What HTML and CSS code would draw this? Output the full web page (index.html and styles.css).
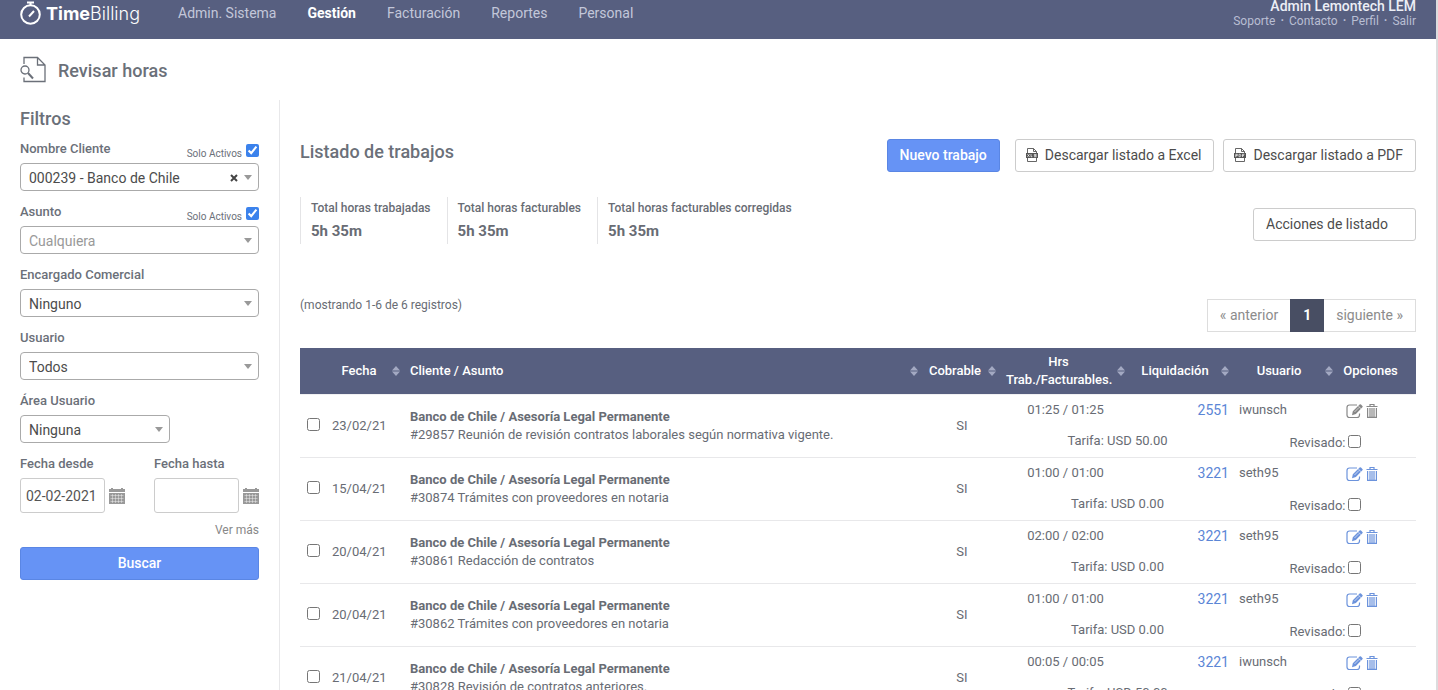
FILE: index.html
```html
<!DOCTYPE html>
<html lang="es">
<head>
    <meta charset="UTF-8">
    <meta name="viewport" content="width=device-width, initial-scale=1.0">
    <title>TimeBilling - Revisar horas</title>
    <link rel="stylesheet" href="styles.css">
</head>
<body>
    <svg class="sprite" aria-hidden="true">
        <symbol id="icon-edit" viewBox="0 0 17 16">
            <path d="M11 2H3.500Q1 2 1 4.500V12Q1 14.500 3.500 14.500H11Q13.500 14.500 13.500 12V10.500" fill="none" stroke="currentColor" stroke-width="1.200"/>
            <path d="M6 12.200l.8-4L13.600 1.500q.7-.7 1.400 0l1.400 1.400q.7.700 0 1.400L9.900 11z" fill="currentColor"/>
            <path d="M8.500 9l4.600-4.600M12.200 2.900l2.800 2.800" stroke="#fff" stroke-width=".6"/>
        </symbol>
        <symbol id="icon-trash" viewBox="0 0 12 16">
            <path d="M.5 3.500h11M4 3.300V1.500h4v1.800M1.600 5v9.400h8.800V5M4 5v9M6 5v9M8 5v9" fill="none" stroke="currentColor" stroke-width="1.200"/>
        </symbol>
        <symbol id="icon-calendar" viewBox="0 0 16 16">
            <path d="M0 1h2V0h2v1h8V0h2v1h2v3H0z" fill="currentColor"/>
            <path d="M0 5h16v11H0z" fill="currentColor"/>
            <path d="M1.500 7.500h13M1.500 10.500h13M1.500 13.500h13M3.500 6v9M6.500 6v9M9.500 6v9M12.500 6v9" stroke="#fff" stroke-width=".4"/>
        </symbol>
        <symbol id="icon-sort" viewBox="0 0 8 10">
            <path d="M0 4.400L4 0l4 4.400zM0 5.600h8L4 10z" fill="currentColor"/>
        </symbol>
    </svg>

    <header class="topbar">
        <a href="#" class="logo">
            <svg width="22" height="25" viewBox="0 0 22 25">
                <circle cx="10.500" cy="13.500" r="9.300" fill="none" stroke="#fff" stroke-width="2"/>
                <path d="M7 1.500h7M10.500 2v3M9 15.500L14 10" fill="none" stroke="#fff" stroke-width="2"/>
            </svg>
            <span><b>Time</b>Billing</span>
        </a>
        <nav class="menu">
            <a href="#">Admin. Sistema</a>
            <a href="#" class="active">Gestión</a>
            <a href="#">Facturación</a>
            <a href="#">Reportes</a>
            <a href="#">Personal</a>
        </nav>
        <div class="user">
            <div class="user-name">Admin Lemontech LEM</div>
            <div class="user-links">
                <a href="#">Soporte</a><span>·</span><a href="#">Contacto</a><span>·</span><a href="#">Perfil</a><span>·</span><a href="#">Salir</a>
            </div>
        </div>
    </header>

    <div class="page-title">
        <svg width="26" height="27" viewBox="0 0 26 27" fill="none" stroke="#6b7079" stroke-width="1.300">
            <path d="M4 8V1.500H17.500L25 9v16.500H4v-4M17.500 1.500V9H25"/>
            <circle cx="5" cy="14" r="4"/>
            <path d="M8 17l5 5.500" stroke-width="2"/>
        </svg>
        <h1>Revisar horas</h1>
    </div>

    <div class="layout">
        <aside class="filters">
            <h2>Filtros</h2>
            <form>
                <div class="form-group">
                    <div class="label-row">
                        <label for="cliente">Nombre Cliente</label>
                        <label class="only-active">Solo Activos <input type="checkbox" checked></label>
                    </div>
                    <div class="select-box">
                        <select id="cliente">
                            <option>000239 - Banco de Chile</option>
                        </select>
                        <button type="button" class="clear" aria-label="Limpiar">
                            <svg width="8" height="8" viewBox="0 0 8 8"><path d="M1 1l6 6M7 1L1 7" stroke="#444" stroke-width="2"/></svg>
                        </button>
                    </div>
                </div>

                <div class="form-group">
                    <div class="label-row">
                        <label for="asunto">Asunto</label>
                        <label class="only-active">Solo Activos <input type="checkbox" checked></label>
                    </div>
                    <div class="select-box">
                        <select id="asunto" class="placeholder">
                            <option>Cualquiera</option>
                        </select>
                    </div>
                </div>

                <div class="form-group">
                    <div class="label-row">
                        <label for="encargado">Encargado Comercial</label>
                    </div>
                    <div class="select-box">
                        <select id="encargado">
                            <option>Ninguno</option>
                        </select>
                    </div>
                </div>

                <div class="form-group">
                    <div class="label-row">
                        <label for="usuario">Usuario</label>
                    </div>
                    <div class="select-box">
                        <select id="usuario">
                            <option>Todos</option>
                        </select>
                    </div>
                </div>

                <div class="form-group">
                    <div class="label-row">
                        <label for="area">Área Usuario</label>
                    </div>
                    <div class="select-box short">
                        <select id="area">
                            <option>Ninguna</option>
                        </select>
                    </div>
                </div>

                <div class="dates">
                    <div>
                        <div class="label-row">
                            <label for="desde">Fecha desde</label>
                        </div>
                        <div class="date-box">
                            <input type="text" id="desde" value="02-02-2021">
                            <svg width="16" height="16"><use href="#icon-calendar"/></svg>
                        </div>
                    </div>
                    <div>
                        <div class="label-row">
                            <label for="hasta">Fecha hasta</label>
                        </div>
                        <div class="date-box">
                            <input type="text" id="hasta">
                            <svg width="16" height="16"><use href="#icon-calendar"/></svg>
                        </div>
                    </div>
                </div>

                <a href="#" class="more">Ver más</a>
                <button type="submit" class="btn btn-primary btn-block">Buscar</button>
            </form>
        </aside>

        <main class="content">
            <div class="content-header">
                <h2>Listado de trabajos</h2>
                <div class="actions">
                    <button class="btn btn-primary">Nuevo trabajo</button>
                    <button class="btn btn-file">
                        <svg width="12" height="14" viewBox="0 0 12 14">
                            <path d="M1.500 5V.5h6l3 3V5M7.500.5v3h3M1.500 10v3.500h9V10" fill="none" stroke="#555" stroke-width=".9"/>
                            <path d="M0 5h12v5H0z" fill="#555"/>
                            <path d="M1.500 6.200l2 2.600M3.500 6.200l-2 2.600M5 6v2.700h1.300M10.500 6.500H8.300v1h1.900v1.200H8" fill="none" stroke="#fff" stroke-width=".7"/>
                        </svg>
                        Descargar listado a Excel
                    </button>
                    <button class="btn btn-file">
                        <svg width="12" height="14" viewBox="0 0 12 14">
                            <path d="M1.500 5V.5h6l3 3V5M7.500.5v3h3M1.500 10v3.500h9V10" fill="none" stroke="#555" stroke-width=".9"/>
                            <path d="M0 5h12v5H0z" fill="#555"/>
                            <path d="M1.800 9V6.300h1.500v1.300H1.800M5 6.300v2.400h.8q1-.2 1-1.200t-1-1.200zM8.500 9V6.300h1.900M8.500 7.600h1.500" fill="none" stroke="#fff" stroke-width=".7"/>
                        </svg>
                        Descargar listado a PDF
                    </button>
                </div>
            </div>

            <div class="summary">
                <dl class="totals">
                    <div>
                        <dt>Total horas trabajadas</dt>
                        <dd>5h 35m</dd>
                    </div>
                    <div>
                        <dt>Total horas facturables</dt>
                        <dd>5h 35m</dd>
                    </div>
                    <div>
                        <dt>Total horas facturables corregidas</dt>
                        <dd>5h 35m</dd>
                    </div>
                </dl>
                <button class="btn btn-list">Acciones de listado</button>
            </div>

            <div class="list-bar">
                <p>(mostrando 1-6 de 6 registros)</p>
                <nav class="pagination">
                    <a href="#">« anterior</a>
                    <a href="#" class="current">1</a>
                    <a href="#">siguiente »</a>
                </nav>
            </div>

            <table>
                <colgroup>
                    <col class="col-check">
                    <col class="col-date">
                    <col>
                    <col class="col-billable">
                    <col class="col-hours">
                    <col class="col-bill">
                    <col class="col-user">
                    <col class="col-options">
                </colgroup>
                <thead>
                    <tr>
                        <th></th>
                        <th>Fecha<svg><use href="#icon-sort"/></svg></th>
                        <th class="left">Cliente / Asunto<svg><use href="#icon-sort"/></svg></th>
                        <th>Cobrable<svg><use href="#icon-sort"/></svg></th>
                        <th>Hrs<br>Trab./Facturables.<svg><use href="#icon-sort"/></svg></th>
                        <th>Liquidación<svg><use href="#icon-sort"/></svg></th>
                        <th>Usuario<svg><use href="#icon-sort"/></svg></th>
                        <th>Opciones</th>
                    </tr>
                </thead>
                <tbody>
                    <tr>
                        <td rowspan="2" class="check"><input type="checkbox" aria-label="Seleccionar"></td>
                        <td rowspan="2" class="date">23/02/21</td>
                        <td rowspan="2"><b>Banco de Chile / Asesoría Legal Permanente</b><br>#29857 Reunión de revisión contratos laborales según normativa vigente.</td>
                        <td rowspan="2" class="center">SI</td>
                        <td class="center">01:25 / 01:25</td>
                        <td class="bill"><a href="#">2551</a></td>
                        <td>iwunsch</td>
                        <td class="options locked"><a href="#" aria-label="Editar"><svg width="17" height="16"><use href="#icon-edit"/></svg></a><a href="#" aria-label="Eliminar"><svg width="12" height="16"><use href="#icon-trash"/></svg></a></td>
                    </tr>
                    <tr class="detail">
                        <td colspan="2" class="center">Tarifa: USD 50.00</td>
                        <td colspan="2" class="center"><label>Revisado: <input type="checkbox"></label></td>
                    </tr>
                </tbody>
                <tbody>
                    <tr>
                        <td rowspan="2" class="check"><input type="checkbox" aria-label="Seleccionar"></td>
                        <td rowspan="2" class="date">15/04/21</td>
                        <td rowspan="2"><b>Banco de Chile / Asesoría Legal Permanente</b><br>#30874 Trámites con proveedores en notaria</td>
                        <td rowspan="2" class="center">SI</td>
                        <td class="center">01:00 / 01:00</td>
                        <td class="bill"><a href="#">3221</a></td>
                        <td>seth95</td>
                        <td class="options"><a href="#" aria-label="Editar"><svg width="17" height="16"><use href="#icon-edit"/></svg></a><a href="#" aria-label="Eliminar"><svg width="12" height="16"><use href="#icon-trash"/></svg></a></td>
                    </tr>
                    <tr class="detail">
                        <td colspan="2" class="center">Tarifa: USD 0.00</td>
                        <td colspan="2" class="center"><label>Revisado: <input type="checkbox"></label></td>
                    </tr>
                </tbody>
                <tbody>
                    <tr>
                        <td rowspan="2" class="check"><input type="checkbox" aria-label="Seleccionar"></td>
                        <td rowspan="2" class="date">20/04/21</td>
                        <td rowspan="2"><b>Banco de Chile / Asesoría Legal Permanente</b><br>#30861 Redacción de contratos</td>
                        <td rowspan="2" class="center">SI</td>
                        <td class="center">02:00 / 02:00</td>
                        <td class="bill"><a href="#">3221</a></td>
                        <td>seth95</td>
                        <td class="options"><a href="#" aria-label="Editar"><svg width="17" height="16"><use href="#icon-edit"/></svg></a><a href="#" aria-label="Eliminar"><svg width="12" height="16"><use href="#icon-trash"/></svg></a></td>
                    </tr>
                    <tr class="detail">
                        <td colspan="2" class="center">Tarifa: USD 0.00</td>
                        <td colspan="2" class="center"><label>Revisado: <input type="checkbox"></label></td>
                    </tr>
                </tbody>
                <tbody>
                    <tr>
                        <td rowspan="2" class="check"><input type="checkbox" aria-label="Seleccionar"></td>
                        <td rowspan="2" class="date">20/04/21</td>
                        <td rowspan="2"><b>Banco de Chile / Asesoría Legal Permanente</b><br>#30862 Trámites con proveedores en notaria</td>
                        <td rowspan="2" class="center">SI</td>
                        <td class="center">01:00 / 01:00</td>
                        <td class="bill"><a href="#">3221</a></td>
                        <td>seth95</td>
                        <td class="options"><a href="#" aria-label="Editar"><svg width="17" height="16"><use href="#icon-edit"/></svg></a><a href="#" aria-label="Eliminar"><svg width="12" height="16"><use href="#icon-trash"/></svg></a></td>
                    </tr>
                    <tr class="detail">
                        <td colspan="2" class="center">Tarifa: USD 0.00</td>
                        <td colspan="2" class="center"><label>Revisado: <input type="checkbox"></label></td>
                    </tr>
                </tbody>
                <tbody>
                    <tr>
                        <td rowspan="2" class="check"><input type="checkbox" aria-label="Seleccionar"></td>
                        <td rowspan="2" class="date">21/04/21</td>
                        <td rowspan="2"><b>Banco de Chile / Asesoría Legal Permanente</b><br>#30828 Revisión de contratos anteriores.</td>
                        <td rowspan="2" class="center">SI</td>
                        <td class="center">00:05 / 00:05</td>
                        <td class="bill"><a href="#">3221</a></td>
                        <td>iwunsch</td>
                        <td class="options"><a href="#" aria-label="Editar"><svg width="17" height="16"><use href="#icon-edit"/></svg></a><a href="#" aria-label="Eliminar"><svg width="12" height="16"><use href="#icon-trash"/></svg></a></td>
                    </tr>
                    <tr class="detail">
                        <td colspan="2" class="center">Tarifa: USD 50.00</td>
                        <td colspan="2" class="center"><label>Revisado: <input type="checkbox"></label></td>
                    </tr>
                </tbody>
            </table>
        </main>
    </div>
</body>
</html>
```
FILE: styles.css
```css
* {
    margin: 0;
    padding: 0;
    box-sizing: border-box;
    font-family: Roboto, "Liberation Sans", sans-serif;
}

body {
    background-color: #fff;
    color: #686c74;
    font-size: 13px;
    line-height: 18px;
    border-right: 2px solid #dcdcde;
}

a {
    color: inherit;
    text-decoration: none;
}

h1, h2 {
    color: #6b7079;
    font-size: 18px;
    font-weight: 500;
    line-height: 24px;
}

input[type="checkbox"] {
    width: 13px;
    height: 13px;
    accent-color: #3b82ec;
}

.sprite {
    display: none;
}

/* Top bar */
.topbar {
    display: flex;
    align-items: flex-start;
    height: 39px;
    padding: 0 20px;
    background-color: #575f80;
    overflow: hidden;
}

.logo {
    display: flex;
    align-items: center;
    gap: 4px;
    width: 158px;
    color: #fff;
    font-size: 18px;
    line-height: 26px;
}

.logo span, .logo b {
    font-family: Inter, sans-serif;
}

.logo span {
    padding-top: 1px;
    font-weight: 300;
}

.logo b {
    font-weight: 700;
}

.menu {
    display: flex;
    gap: 31px;
    font-size: 14px;
    line-height: 26px;
    color: #c3c7da;
}

.menu .active {
    color: #fff;
    font-weight: 700;
}

.user {
    margin-left: auto;
    text-align: right;
}

.user-name {
    color: #eceef6;
    font-size: 14px;
    font-weight: 500;
    line-height: 12px;
}

.user-links {
    color: #b9bed3;
    font-size: 12px;
    line-height: 18px;
}

.user-links span {
    margin: 0 5px;
    font-weight: 700;
}

.page-title {
    display: flex;
    align-items: center;
    gap: 12px;
    height: 61px;
    padding: 0 20px;
}

.page-title h1 {
    padding-top: 2px;
}

.layout {
    display: flex;
}

/* Filters */
.filters {
    width: 280px;
    flex-shrink: 0;
    padding: 7px 20px 0;
    border-right: 1px solid #e8e8ea;
}

.filters h2 {
    margin-bottom: 9px;
}

.form-group {
    margin-bottom: 12px;
}

.label-row {
    display: flex;
    justify-content: space-between;
    height: 23px;
    font-weight: 500;
    color: #6b7079;
}

.only-active {
    display: flex;
    align-items: center;
    gap: 4px;
    padding-top: 4px;
    font-size: 10px;
    font-weight: 400;
}

.only-active input {
    margin-bottom: 6px;
}

.select-box {
    position: relative;
}

.select-box.short {
    width: 150px;
}

.select-box::after {
    content: "";
    position: absolute;
    right: 7px;
    top: 12px;
    border: 4px solid transparent;
    border-top: 5px solid #999;
    border-bottom: 0;
    pointer-events: none;
}

select {
    display: block;
    width: 100%;
    height: 28px;
    padding: 2px 8px 0;
    appearance: none;
    background-color: #fff;
    border: 1px solid #aaa;
    border-radius: 4px;
    color: #4c4c4c;
    font-size: 14px;
}

select.placeholder {
    color: #999;
}

.clear {
    position: absolute;
    right: 21px;
    top: 11px;
    width: 8px;
    height: 8px;
    border: none;
    background: none;
    cursor: pointer;
}

.clear svg {
    display: block;
}

.dates {
    display: flex;
    justify-content: space-between;
}

.date-box {
    display: flex;
    align-items: center;
    gap: 4px;
    color: #999;
}

.date-box input {
    width: 85px;
    height: 35px;
    padding: 0 5px;
    border: 1px solid #ccc;
    border-radius: 3px;
    color: #555;
    font-size: 14px;
}

.more {
    display: block;
    margin: 8px 0;
    color: #888;
    font-size: 12px;
    text-align: right;
}

/* Buttons */
.btn {
    display: flex;
    align-items: center;
    height: 33px;
    padding: 0 12px 2px;
    background-color: #fff;
    border: 1px solid #ccc;
    border-radius: 3px;
    color: #4c4c4c;
    font-size: 14px;
    cursor: pointer;
}

.btn-primary {
    background-color: #6693f5;
    border-color: #5a86e4;
    color: #fff;
    font-weight: 500;
}

.btn-block {
    width: 100%;
    justify-content: center;
}

.btn-file {
    gap: 7px;
    padding-left: 10px;
}

.btn-list {
    width: 163px;
    margin-bottom: 3px;
}

/* Content */
.content {
    flex: 1;
    padding: 39px 20px 0;
}

.content-header {
    display: flex;
    justify-content: space-between;
}

.content-header h2 {
    padding-top: 1px;
}

.actions {
    display: flex;
    gap: 9px;
}

.actions .btn-primary {
    margin-right: 6px;
}

.summary {
    display: flex;
    justify-content: space-between;
    align-items: flex-end;
    height: 72px;
}

.totals {
    display: flex;
}

.totals div {
    height: 47px;
    padding: 2px 16px 0 10px;
    border-left: 1px solid #e4e4e6;
}

.totals dt {
    font-size: 12px;
    font-weight: 500;
    margin-bottom: 5px;
}

.totals dd {
    font-size: 15px;
    font-weight: 700;
}

.list-bar {
    display: flex;
    justify-content: space-between;
    margin: 55px 0 16px;
}

.list-bar p {
    margin-top: -3px;
    font-size: 12px;
}

.pagination {
    display: flex;
    border: 1px solid #ddd;
    color: #8c8c8c;
    font-size: 14px;
    line-height: 31px;
}

.pagination a {
    padding: 0 12px;
}

.pagination .current {
    margin: -1px 0;
    padding: 1px 13px;
    background-color: #484e63;
    color: #fff;
    font-weight: 700;
}

/* Table */
table {
    width: 100%;
    table-layout: fixed;
    border-collapse: separate;
    border-spacing: 0;
}

.col-check {
    width: 26px;
}

.col-date {
    width: 78px;
}

.col-billable {
    width: 78px;
}

.col-hours {
    width: 129px;
}

.col-bill, .col-user {
    width: 104px;
}

.col-options {
    width: 79px;
}

th {
    position: relative;
    height: 47px;
    padding: 0 18px 0 6px;
    background-color: #575f80;
    border-bottom: 1px solid #f0f0f2;
    color: #fff;
    font-weight: 500;
    white-space: nowrap;
}

th.left {
    text-align: left;
}

th svg {
    position: absolute;
    right: 4px;
    top: 18px;
    width: 8px;
    height: 10px;
    color: #a3a9c2;
}

td {
    height: 30px;
    padding: 0 6px;
    vertical-align: middle;
}

.detail td, td[rowspan] {
    border-bottom: 1px solid #e8e8ea;
}

.detail td {
    height: 33px;
}

td.center {
    padding-left: 8px;
    text-align: center;
}

td.check {
    padding: 2px 0 0;
    text-align: center;
}

td.bill {
    padding-right: 4px;
    color: #5b86d6;
    font-size: 14px;
    text-align: right;
}

td.options {
    padding-left: 9px;
}

.options a {
    display: inline-block;
    margin-right: 3px;
    height: 16px;
    color: #6c93dc;
    vertical-align: middle;
}

.options svg {
    display: block;
}

.options.locked a {
    color: #888;
}

td label {
    display: inline-flex;
    align-items: center;
    gap: 3px;
    padding-top: 3px;
}

td label input {
    margin-bottom: 3px;
}
```
